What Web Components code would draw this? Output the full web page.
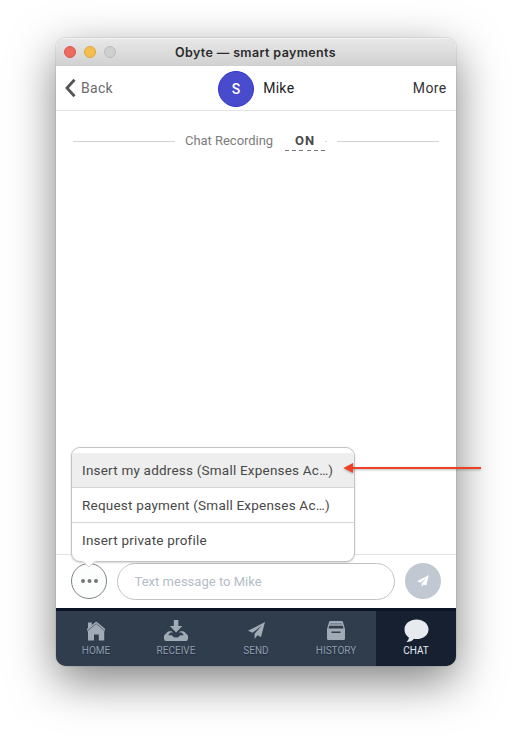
<!DOCTYPE html>
<html lang="en">
<head>
<meta charset="utf-8">
<title>Obyte — smart payments</title>
<style>
html,body{margin:0;height:100%;overflow:hidden;background:#fff}
body{font-family:Roboto,"Liberation Sans",sans-serif}
</style>
</head>
<body>
<obyte-window></obyte-window>
<script>
const define = (name, css, html) => {
  const t = document.createElement('template');
  t.innerHTML = `<style>:host,*{box-sizing:border-box}svg{display:block}${css}</style>${html}`;
  customElements.define(name, class extends HTMLElement {
    constructor() {
      super();
      this.attachShadow({mode: 'open'}).append(t.content.cloneNode(true));
    }
  });
};

define('title-bar', `
:host{display:grid;grid-template-columns:60px 1fr 60px;align-items:center;height:28px;padding:0 8px;background:linear-gradient(#e9e8e9,#d2d1d2);box-shadow:inset 0 1px #f4f4f4}
.lights{display:flex;gap:8px}
i{width:12px;height:12px;border-radius:50%;background:#ed6a5e;border:1px solid #d8584e}
i:nth-child(2){background:#f5bf4f;border-color:#dca73e}
i:nth-child(3){background:#d0cfd0;border-color:#bcbbbc}
.title{text-align:center;font:600 12.500px/27px Inter,sans-serif;letter-spacing:.36px;color:#2b2b2b;white-space:nowrap;padding-right:1px}
`, `<div class="lights"><i></i><i></i><i></i></div><div class="title"><slot></slot></div>`);

define('chat-header', `
:host{display:grid;grid-template-columns:1fr auto 1fr;align-items:center;height:45px;padding:0 9.5px 0 9px;border-bottom:1px solid #e4e4e4;font-size:14px;letter-spacing:.3px;background:#fff;line-height:18px}
.back{display:flex;align-items:center;gap:5px;color:#6c6c6c}
.who{display:flex;align-items:center;gap:9px;color:#222;padding:1px 0 0 1px}
.avatar{width:36px;height:36px;border-radius:50%;background:#484bcb;border:1px solid #3133ce;color:#fff;font-weight:500;font-size:14px;display:grid;place-items:center}
.name{font-weight:400;padding-bottom:2px}
.more{text-align:right;color:#333;letter-spacing:.35px}
`, `<div class="back"><svg width="11" height="20" viewBox="0 0 11 20"><path d="M9.5 1.8 2 10l7.500 8.200" fill="none" stroke="#555" stroke-width="2.800"/></svg><span>Back</span></div>
<div class="who"><div class="avatar">S</div><span class="name"><slot></slot></span></div><div class="more">More</div>`);

define('recording-status', `
:host{display:flex;align-items:center;height:24px;margin:18px 17px 0;font-size:13px;color:#7c7c7c;line-height:20px}
hr{flex:none;width:102px;height:1px;border:0;background:#d2d2d2;margin:1px 0 0}
.label{margin-left:10px;width:89px;letter-spacing:-.03px;white-space:nowrap}
.state{margin-left:11px;width:40px;height:21px;padding-top:1px;margin-top:-1px;font-weight:700;letter-spacing:1px;text-align:center;color:#4a4a4a;line-height:19px;background:repeating-linear-gradient(90deg,#777 0 4px,transparent 4px 7.2px) 0 100%/100% 1px no-repeat}
.tick{width:2px;margin-right:auto}
`, `<hr><span class="label">Chat Recording</span><span class="state">ON</span><hr class="tick"><hr>`);

define('menu-item', `
:host{display:block;height:35px;padding:0 11px 0 10px;border-bottom:1px solid #d5d5d5;font-size:13.5px;line-height:34px;letter-spacing:.21px;color:#484848;white-space:nowrap}
:host([active]){background:#eee}
:host(:last-of-type){border-bottom:0}
`, `<slot></slot>`);

define('action-menu', `
:host{display:block;position:absolute;left:15px;bottom:46px;width:284px;height:115px;padding:5px 0;background:#fff;border:1px solid #c3c3c3;border-radius:9px;box-shadow:0 1px 2px rgba(0,0,0,.17);z-index:2}
.beak{position:absolute;left:10px;bottom:-7px}
`, `<slot></slot><svg class="beak" width="14" height="8" viewBox="0 0 14 8"><path d="M0 0h14v1.500h-1L7 7 1 1.500H0z" fill="#fff"/><path d="M1 1.500 7 7l6-5.500" fill="none" stroke="#c6c6c6" stroke-width=".8"/></svg>`);

define('message-composer', `
:host{display:flex;position:relative;gap:10px;height:54px;padding:8px 15px 9px;border-top:1px solid #e3e3e3;background:#fff}
.round{flex:none;display:grid;place-items:center;width:36px;height:36px;border-radius:50%}
.dots{border:1px solid #818181;background:#fcfefe}
.send{background:#c1c8d1}
.field{flex:1;height:37px;border:1px solid #c2c2c2;border-radius:19px;padding:0 16.500px;font-size:13px;line-height:36px;letter-spacing:.02px;color:#b4bcc8}
`, `<div class="round dots"><svg width="17" height="4"><g fill="#777"><circle cx="2" cy="2" r="2"/><circle cx="8.500" cy="2" r="2"/><circle cx="15" cy="2" r="2"/></g></svg></div>
<div class="field">Text message to Mike</div>
<div class="round send"><svg width="12" height="12" viewBox="0 0 12 12"><path d="M12 0 0 6.200l3.300 1.500L9.800 2.500 4.700 8.300V12l2-2.600 2.500 1.200z" fill="#fff"/></svg></div><slot></slot>`);

define('nav-tab', `
:host{flex:1;display:flex;flex-direction:column;align-items:center;padding-top:8px;gap:3px;color:#929da9;background:#303d4d;font-size:10px;line-height:12px;text-shadow:0 1px 1px #1b2940}
:host([active]){background:#162030;color:#e6e9ee}
.icon{height:23px;display:grid;place-items:center}
`, `<div class="icon"><slot name="icon"></slot></div><span><slot></slot></span>`);

define('nav-bar', `:host{display:flex;height:58px;border-top:3px solid #0b1426;background:#303d4d}`, `<slot></slot>`);

define('pointer-arrow', `
:host{display:block;position:absolute;left:342px;top:460px;z-index:3}
svg{overflow:visible;filter:drop-shadow(0 1.500px 1px rgba(0,0,0,.28))}
`, `<svg width="140" height="16"><path d="M10 8h129" stroke="#ee4027" stroke-width="2"/><path d="M1.500 8 11 2.900v10.200z" fill="#ee4027"/></svg>`);

define('obyte-window', `
:host{display:block;width:512px;height:740px;padding:38px 56px 74px}
.frame{height:628px;border-radius:10px;box-shadow:0 0 0 1px rgba(0,0,0,.07),0 15px 46px rgba(0,0,0,.5)}
.window{display:flex;flex-direction:column;height:100%;border-radius:10px;overflow:hidden;background:#fff}
.chat{flex:1;background:#fff}
`, `<div class="frame"><div class="window">
<title-bar>Obyte — smart payments</title-bar>
<chat-header>Mike</chat-header>
<div class="chat"><recording-status></recording-status></div>
<message-composer><action-menu><menu-item active>Insert my address (Small Expenses Ac…)</menu-item><menu-item>Request payment (Small Expenses Ac…)</menu-item><menu-item>Insert private profile</menu-item></action-menu></message-composer>
<nav-bar>
<nav-tab><svg slot="icon" width="20" height="20" viewBox="0 0 20 20"><path d="M2 1.500h3.800V4L9.800.700h.8L19 7.800v2.400h-.8V19.500h-5.400v-6H8v6H2V10.200h-1V7.800l1-.9z" fill="#a1abb6"/><path d="M1 10.200 10.200 2.600 19 10.200" fill="none" stroke="#4a5768" stroke-width=".8"/></svg>HOME</nav-tab>
<nav-tab><svg slot="icon" width="24" height="22" viewBox="0 0 24 22" fill="#a1abb6"><path d="M9.800 0h4.600v6h3.900L12.100 12.500 5.900 6h3.900z"/><path d="M5 11.200h2.800l1.200 1.400H6.400l-2.300 2.600h3.300q.8 0 1.100.8.800 1.500 3.500 1.500t3.500-1.500q.3-.8 1.100-.8h3.300l-2.300-2.600H15l1.200-1.400H19q.8 0 1.300.6l3 3q.7.700.7 1.700v2.300q0 2.200-2.200 2.200H2.200Q0 21 0 18.800v-2.300q0-1 .7-1.700l3-3q.5-.6 1.300-.6z"/></svg>RECEIVE</nav-tab>
<nav-tab><svg slot="icon" width="17" height="17" viewBox="0 0 17 17"><path d="M17 0 0 8.800l4.600 2L13.700 3.500 6.600 11.800V17l2.900-3.700 3.500 1.600z" fill="#a1abb6"/></svg>SEND</nav-tab>
<nav-tab><svg slot="icon" width="18" height="19" viewBox="0 0 18 19"><path d="M3.500 0h11q1.200 0 1.500 1.200L18 8v9.500q0 1.500-1.500 1.500h-15Q0 19 0 17.500V8l2-6.800Q2.300 0 3.500 0z" fill="#a1abb6"/><path d="M3 2h12l.4 1.400H2.600z" fill="#7a8694"/><path d="M2.200 4.800h13.600l.7 2.800h-15zM4.500 10.600h9v1.500h-9z" fill="#303d4d"/></svg>HISTORY</nav-tab>
<nav-tab active><svg slot="icon" width="25" height="24" viewBox="0 0 25 24"><path d="M12.500.5C5.800.5.500 4.800.500 10.400c0 3.500 1.700 6.300 4.400 8-.1 1.700-1 3.300-2.600 4.600 3.300.1 6-1 7.600-3.200 8.300 1.200 14.600-3.400 14.600-9.400C24.500 4.800 19.200.5 12.500.5z" fill="#e7eaef"/></svg>CHAT</nav-tab>
</nav-bar></div></div><pointer-arrow></pointer-arrow>`);
</script>
</body>
</html>
